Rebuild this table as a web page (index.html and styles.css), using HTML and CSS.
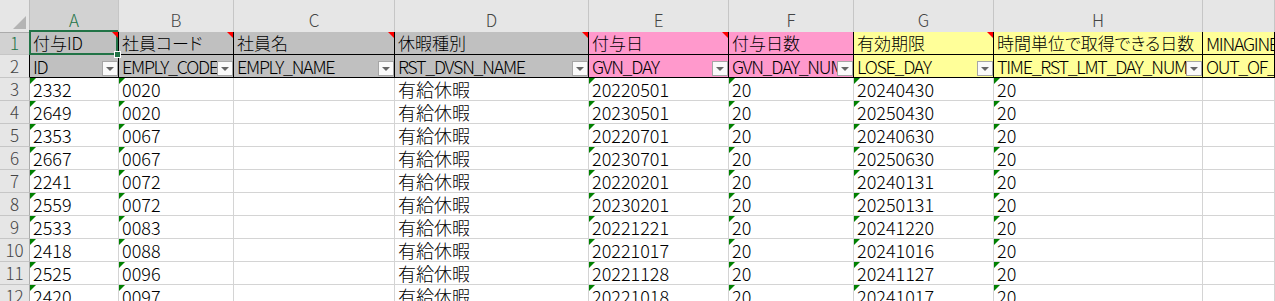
FILE: index.html
```html
<!DOCTYPE html>
<html lang="ja">
<head>
<meta charset="utf-8">
<title>Sheet</title>
<link rel="stylesheet" href="styles.css">
</head>
<body>
<div class="sheet">
  <div class="row colhead">
    <div class="corner"><span class="corner-tri"></span></div>
    <div class="ch sel">A</div>
    <div class="ch">B</div>
    <div class="ch">C</div>
    <div class="ch">D</div>
    <div class="ch">E</div>
    <div class="ch">F</div>
    <div class="ch">G</div>
    <div class="ch">H</div>
    <div class="ch"></div>
  </div>

  <div class="row hrow r1">
    <div class="rh sel">1</div>
    <div class="c gray">付与ID<span class="cm"></span></div>
    <div class="c gray">社員コード<span class="cm"></span></div>
    <div class="c gray">社員名<span class="cm"></span></div>
    <div class="c gray">休暇種別<span class="cm"></span></div>
    <div class="c pink">付与日<span class="cm"></span></div>
    <div class="c pink">付与日数</div>
    <div class="c yellow">有効期限<span class="cm"></span></div>
    <div class="c yellow">時間単位で取得できる日数</div>
    <div class="c yellow latin">MINAGINE連携除外</div>
  </div>

  <div class="row hrow r2">
    <div class="rh">2</div>
    <div class="c gray latin">ID<span class="fb"></span></div>
    <div class="c gray latin">EMPLY_CODE<span class="fb"></span></div>
    <div class="c gray latin">EMPLY_NAME<span class="fb"></span></div>
    <div class="c gray latin">RST_DVSN_NAME<span class="fb"></span></div>
    <div class="c pink latin">GVN_DAY<span class="fb"></span></div>
    <div class="c pink latin">GVN_DAY_NUM<span class="fb"></span></div>
    <div class="c yellow latin">LOSE_DAY<span class="fb"></span></div>
    <div class="c yellow latin">TIME_RST_LMT_DAY_NUM<span class="fb"></span></div>
    <div class="c yellow latin">OUT_OF_SYNC_FLG</div>
  </div>

  <div class="row"><div class="rh">3</div><div class="c t">2332</div><div class="c t">0020</div><div class="c"></div><div class="c">有給休暇</div><div class="c t">20220501</div><div class="c t">20</div><div class="c t">20240430</div><div class="c t">20</div><div class="c"></div></div>
  <div class="row"><div class="rh">4</div><div class="c t">2649</div><div class="c t">0020</div><div class="c"></div><div class="c">有給休暇</div><div class="c t">20230501</div><div class="c t">20</div><div class="c t">20250430</div><div class="c t">20</div><div class="c"></div></div>
  <div class="row"><div class="rh">5</div><div class="c t">2353</div><div class="c t">0067</div><div class="c"></div><div class="c">有給休暇</div><div class="c t">20220701</div><div class="c t">20</div><div class="c t">20240630</div><div class="c t">20</div><div class="c"></div></div>
  <div class="row"><div class="rh">6</div><div class="c t">2667</div><div class="c t">0067</div><div class="c"></div><div class="c">有給休暇</div><div class="c t">20230701</div><div class="c t">20</div><div class="c t">20250630</div><div class="c t">20</div><div class="c"></div></div>
  <div class="row"><div class="rh">7</div><div class="c t">2241</div><div class="c t">0072</div><div class="c"></div><div class="c">有給休暇</div><div class="c t">20220201</div><div class="c t">20</div><div class="c t">20240131</div><div class="c t">20</div><div class="c"></div></div>
  <div class="row"><div class="rh">8</div><div class="c t">2559</div><div class="c t">0072</div><div class="c"></div><div class="c">有給休暇</div><div class="c t">20230201</div><div class="c t">20</div><div class="c t">20250131</div><div class="c t">20</div><div class="c"></div></div>
  <div class="row"><div class="rh">9</div><div class="c t">2533</div><div class="c t">0083</div><div class="c"></div><div class="c">有給休暇</div><div class="c t">20221221</div><div class="c t">20</div><div class="c t">20241220</div><div class="c t">20</div><div class="c"></div></div>
  <div class="row"><div class="rh">10</div><div class="c t">2418</div><div class="c t">0088</div><div class="c"></div><div class="c">有給休暇</div><div class="c t">20221017</div><div class="c t">20</div><div class="c t">20241016</div><div class="c t">20</div><div class="c"></div></div>
  <div class="row"><div class="rh">11</div><div class="c t">2525</div><div class="c t">0096</div><div class="c"></div><div class="c">有給休暇</div><div class="c t">20221128</div><div class="c t">20</div><div class="c t">20241127</div><div class="c t">20</div><div class="c"></div></div>
  <div class="row"><div class="rh">12</div><div class="c t">2420</div><div class="c t">0097</div><div class="c"></div><div class="c">有給休暇</div><div class="c t">20221018</div><div class="c t">20</div><div class="c t">20241017</div><div class="c t">20</div><div class="c"></div></div>

  <div class="selbox"></div>
  <div class="handle"></div>
</div>
</body>
</html>
```

FILE: styles.css
```css
* { box-sizing: border-box; }

html, body {
  margin: 0;
  padding: 0;
  overflow: hidden;
  background: #ffffff;
}

.sheet {
  position: relative;
  width: 1275px;
  font-family: "Noto Sans CJK JP", "Noto Sans", sans-serif;
  font-size: 18px;
  font-weight: 300;
  color: #000;
}

.row {
  display: grid;
  grid-template-columns: 30px 89px 115px 161px 194px 140px 125px 140px 209px 1fr;
  height: 23px;
}

.colhead { height: 32px; }

.corner {
  position: relative;
  background: #e6e6e6;
  border-right: 1px solid #bdbdbd;
  border-bottom: 1px solid #ababab;
}

.corner-tri {
  position: absolute;
  right: 3px;
  bottom: 3px;
  width: 0;
  height: 0;
  border-left: 13px solid transparent;
  border-bottom: 13px solid #b4b4b4;
}

.ch {
  background: #e6e6e6;
  color: #444;
  border-right: 1px solid #c6c6c6;
  border-bottom: 1px solid #ababab;
  text-align: center;
  font-size: 17px;
  line-height: 22px;
  padding-top: 9px;
}

.ch.sel {
  background: #d2d2d2;
  color: #217346;
  border-bottom: 2px solid #217346;
}

.rh {
  background: #e6e6e6;
  color: #444;
  border-right: 1px solid #ababab;
  border-bottom: 1px solid #c6c6c6;
  text-align: center;
  font-size: 17px;
  line-height: 22px;
}

.rh.sel {
  background: #d2d2d2;
  color: #217346;
}

.c {
  position: relative;
  border-right: 1px solid #d4d4d4;
  border-bottom: 1px solid #d4d4d4;
  padding: 0 0 0 3px;
  line-height: 22px;
  white-space: nowrap;
  overflow: hidden;
}

.hrow .c {
  border-right-color: #000;
  border-bottom-color: #000;
}

.r1 .c {
  font-size: 17px;
  font-feature-settings: "palt";
}

.hrow .rh { border-right-color: #000; }
.r1 .rh { border-right-color: #ababab; }

.gray { background: #c0c0c0; }
.pink { background: #ff99cc; }
.yellow { background: #ffff99; }

.latin { letter-spacing: -1.3px; }
.r1 .latin { font-size: 18px; }

/* comment indicator */
.cm {
  position: absolute;
  z-index: 2;
  top: 0;
  right: 0;
  width: 0;
  height: 0;
  border-top: 6px solid #ff0000;
  border-left: 6px solid transparent;
}

/* number-stored-as-text indicator */
.t::before {
  content: "";
  position: absolute;
  top: 0;
  left: 0;
  width: 0;
  height: 0;
  border-top: 6px solid #008000;
  border-right: 6px solid transparent;
}

/* autofilter button */
.fb {
  position: absolute;
  right: 0;
  top: 6px;
  width: 16px;
  height: 15px;
  background: #fafafa;
  border: 1px solid #a6a6a6;
  letter-spacing: 0;
}

.fb::after {
  content: "";
  position: absolute;
  left: 3px;
  top: 5px;
  width: 0;
  height: 0;
  border-top: 4px solid #666;
  border-left: 4px solid transparent;
  border-right: 4px solid transparent;
}

.selbox {
  position: absolute;
  left: 29px;
  top: 30px;
  width: 89px;
  height: 25px;
  border: 2px solid #217346;
  pointer-events: none;
}

.handle {
  position: absolute;
  z-index: 3;
  left: 114px;
  top: 51px;
  width: 7px;
  height: 7px;
  background: #217346;
  border: 1px solid #ffffff;
}
```
